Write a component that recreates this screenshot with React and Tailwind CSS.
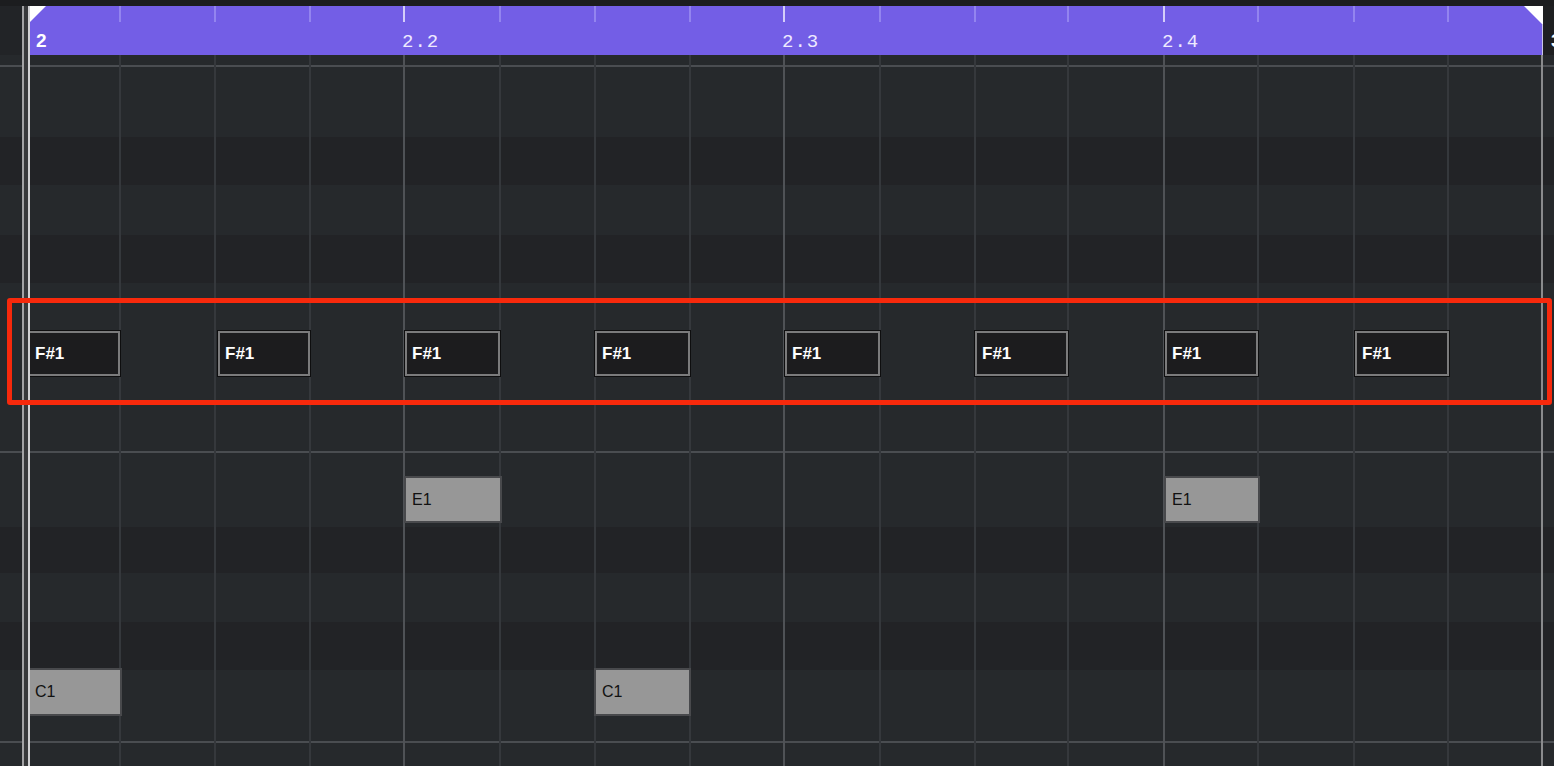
import React from "react";

const stripes = [
  { h: "h-[82px]", c: "bg-[#26292c]" },
  { h: "h-[48px]", c: "bg-[#222326]" },
  { h: "h-[50px]", c: "bg-[#26292c]" },
  { h: "h-[48px]", c: "bg-[#222326]" },
  { h: "h-[244px]", c: "bg-[#26292c]" },
  { h: "h-[46px]", c: "bg-[#222326]" },
  { h: "h-[49px]", c: "bg-[#26292c]" },
  { h: "h-[48px]", c: "bg-[#222326]" },
  { h: "h-[96px]", c: "bg-[#26292c]" },
];

const vlines = [
  "left-[119px] w-[2px] bg-[#35383c]",
  "left-[214px] w-[2px] bg-[#35383c]",
  "left-[309px] w-[2px] bg-[#35383c]",
  "left-[403px] w-[2px] bg-[#4f5256]",
  "left-[499px] w-[2px] bg-[#35383c]",
  "left-[594px] w-[2px] bg-[#35383c]",
  "left-[689px] w-[2px] bg-[#35383c]",
  "left-[783px] w-[2px] bg-[#4f5256]",
  "left-[879px] w-[2px] bg-[#35383c]",
  "left-[974px] w-[2px] bg-[#35383c]",
  "left-[1067px] w-[2px] bg-[#35383c]",
  "left-[1163px] w-[2px] bg-[#4f5256]",
  "left-[1257px] w-[2px] bg-[#35383c]",
  "left-[1353px] w-[2px] bg-[#35383c]",
  "left-[1447px] w-[2px] bg-[#35383c]",
  "left-[1541px] w-[2px] bg-[#8a8b8d]",
];

const hlines = ["top-[10px]", "top-[396px]", "top-[686px]"];

const ticks = [
  "left-[90px] bg-[#9384ef]",
  "left-[185px] bg-[#9384ef]",
  "left-[280px] bg-[#9384ef]",
  "left-[374px] bg-[#d4cdf9]",
  "left-[470px] bg-[#9384ef]",
  "left-[565px] bg-[#9384ef]",
  "left-[660px] bg-[#9384ef]",
  "left-[754px] bg-[#d4cdf9]",
  "left-[850px] bg-[#9384ef]",
  "left-[945px] bg-[#9384ef]",
  "left-[1038px] bg-[#9384ef]",
  "left-[1134px] bg-[#d4cdf9]",
  "left-[1228px] bg-[#9384ef]",
  "left-[1324px] bg-[#9384ef]",
  "left-[1418px] bg-[#9384ef]",
];

const sharpNotes = [
  "left-[27px] w-[94px]",
  "left-[217px] w-[94px]",
  "left-[404px] w-[97px]",
  "left-[594px] w-[97px]",
  "left-[784px] w-[97px]",
  "left-[974px] w-[95px]",
  "left-[1164px] w-[95px]",
  "left-[1354px] w-[96px]",
];

const eNotes = ["left-[404px] w-[98px]", "left-[1164px] w-[96px]"];
const cNotes = ["left-[27px] w-[95px]", "left-[594px] w-[97px]"];

function DarkNote({ pos }) {
  return (
    <div className={`absolute top-[275px] h-[47px] ${pos} bg-[#0e0e0f] p-px`}>
      <div className="w-full h-full border-2 border-[#7b7b7c] bg-[#1c1c1e] flex items-center pl-[5px]">
        <span className="text-[17px] leading-none font-bold text-white">F#1</span>
      </div>
    </div>
  );
}

function GreyNote({ pos, top, label }) {
  return (
    <div
      className={`absolute ${top} ${pos} border-2 border-[#48494c] bg-[#979797] flex items-center pl-[6px]`}
    >
      <span className="text-[16px] leading-none text-[#111111]">{label}</span>
    </div>
  );
}

export default function App() {
  return (
    <div className="w-[1554px] h-[766px] relative overflow-hidden bg-[#26292c] flex flex-col font-['Liberation_Sans',Arial,sans-serif]">
      {/* top strip */}
      <div className="h-[6px] shrink-0 bg-[#1c1d1f]" />

      {/* ruler */}
      <div className="h-[49px] shrink-0 flex">
        <div className="w-[29px] bg-[#222427]" />
        <div className="relative w-[1514px] bg-[#735ee6]">
          {ticks.map((t, i) => (
            <div key={i} className={`absolute top-0 h-[16px] w-[2px] ${t}`} />
          ))}
          <svg className="absolute left-0 top-0" width="17" height="17" viewBox="0 0 17 17">
            <polygon points="0,0 17,0 0,17" fill="#ffffff" />
          </svg>
          <svg className="absolute right-0 top-0" width="19" height="19" viewBox="0 0 19 19">
            <polygon points="0,0 19,0 19,19" fill="#ffffff" />
          </svg>
          <div className="absolute right-0 top-[18px] bottom-0 w-[1px] bg-[#c9c6e6]" />
          <span className="absolute left-[7px] top-[25px] text-[19px] leading-none font-bold text-white">
            2
          </span>
          <span className="absolute left-[373px] top-[27px] text-[19px] leading-none tracking-[1px] text-[#eeeaff] font-['Liberation_Mono',monospace]">
            2.2
          </span>
          <span className="absolute left-[753px] top-[27px] text-[19px] leading-none tracking-[1px] text-[#eeeaff] font-['Liberation_Mono',monospace]">
            2.3
          </span>
          <span className="absolute left-[1133px] top-[27px] text-[19px] leading-none tracking-[1px] text-[#eeeaff] font-['Liberation_Mono',monospace]">
            2.4
          </span>
        </div>
        <div className="relative flex-1 bg-[#1e1f21] overflow-hidden">
          <span className="absolute left-[8px] top-[25px] text-[19px] leading-none font-bold text-white">
            3
          </span>
        </div>
      </div>

      {/* grid */}
      <div className="relative flex-1 flex flex-col">
        {stripes.map((s, i) => (
          <div key={i} className={`${s.h} ${s.c} shrink-0`} />
        ))}
        {hlines.map((h, i) => (
          <div key={i} className={`absolute left-0 right-0 h-[2px] bg-[#4a4d51] ${h}`} />
        ))}
        {vlines.map((v, i) => (
          <div key={i} className={`absolute top-0 bottom-0 ${v}`} />
        ))}

        {sharpNotes.map((p, i) => (
          <DarkNote key={i} pos={p} />
        ))}
        {eNotes.map((p, i) => (
          <GreyNote key={i} pos={p} top="top-[421px] h-[47px]" label="E1" />
        ))}
        {cNotes.map((p, i) => (
          <GreyNote key={i} pos={p} top="top-[613px] h-[48px]" label="C1" />
        ))}
      </div>

      {/* playhead */}
      <div className="absolute left-[22px] top-[6px] bottom-0 flex">
        <div className="w-[2px] bg-[#a3a3a5]" />
        <div className="w-[4px] bg-[#38393b]" />
        <div className="w-[2px] bg-[#d2d2d4]" />
      </div>

      {/* highlight annotation */}
      <div className="absolute left-[7px] top-[298px] w-[1545px] h-[107px] border-[5px] border-[#f7290c] rounded-[3px]" />
    </div>
  );
}
